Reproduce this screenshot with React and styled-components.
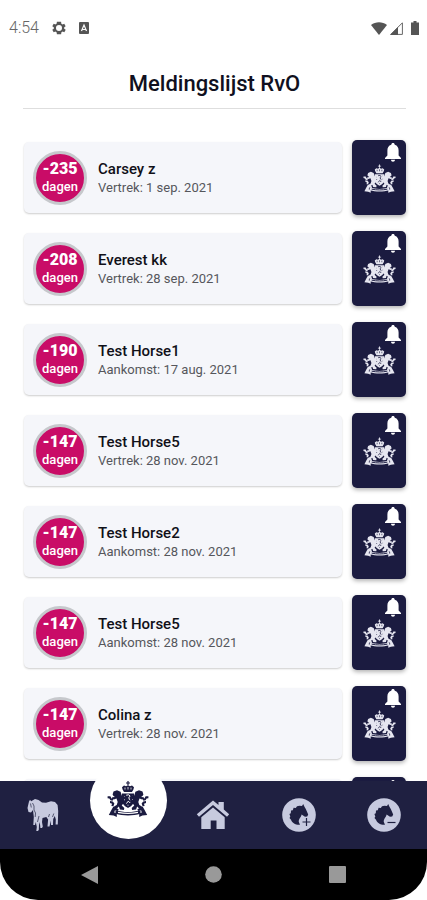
import React from 'react'
import styled, { createGlobalStyle } from 'styled-components'

const items = [
  { days: '-235', name: 'Carsey z', info: 'Vertrek: 1 sep. 2021' },
  { days: '-208', name: 'Everest kk', info: 'Vertrek: 28 sep. 2021' },
  { days: '-190', name: 'Test Horse1', info: 'Aankomst: 17 aug. 2021' },
  { days: '-147', name: 'Test Horse5', info: 'Vertrek: 28 nov. 2021' },
  { days: '-147', name: 'Test Horse2', info: 'Aankomst: 28 nov. 2021' },
  { days: '-147', name: 'Test Horse5', info: 'Aankomst: 28 nov. 2021' },
  { days: '-147', name: 'Colina z', info: 'Vertrek: 28 nov. 2021' },
  { days: '', name: '', info: '' },
]

const LionHalf = () => (
  <g>
    <path d="M5.600 13.500 6.500 10.600l3.500-1.400 3.600 1.600 1 3.200 1.700 3.500.4 4.500-2 2.500 2.600 2.500-.4 2-4-.6-1-2.800-2 1.800-3 .6.200-2.400 2.600-1.600 1-3-1.200-3.500-2.600 1-2.200-.8.600-1.400 2.600-.4-1.600-1.200z" />
    <path d="M14.500 15.500 18 13.200l.6 1.200-3.600 3zM15.500 20l3.500-1 .4 1.400-3.600 1.800z" />
    <path d="M.6 15.200h2.800l1.200 2.200 1.600.8-.6 1.600-2.200-.6-1-1.600-1.800-.4zM3 20l2.800.6 1.600 2-1 2.600-2-.2.6-2.200-2-.8z" />
    <path d="M6.400 25.400 4.400 29l-2.600 5 4.800.6 3.200 1.400v-3.600l-2.600-1 .8-2.400 3 1 .6-1.800z" />
  </g>
)

const Emblem = ({ size, cutout }) => (
  <svg width={size} height={size} viewBox="0 0 42 38" fill="currentColor" aria-hidden="true">
    <path d="M20.400 0h1.200v1.400H23v1.200h-1.400v1.600h-1.200V2.600H19V1.400h1.400z" />
    <path d="M15 6.200 17 4.600l2 .6 2-1 2 1 2-.6 2 1.600-.6 2.200L25 11h-8l-1.400-2.600z" />
    <path d="M18 6.500v2M21 6v2.500M24 6.500v2" stroke={cutout} strokeWidth="0.8" />
    <path d="M15 12.400h12v7.200c0 3.600-3 6-6 7.400-3-1.400-6-3.800-6-7.400z" />
    <path d="m19.200 14.200 2.400-.4 1.600 1.400-1.400 1.200.6 2.200 1.800 1.400-1.400 1.600-1.600-1.400-1.800 2.400" fill="none" stroke={cutout} strokeWidth="1" />
    <path d="M16.800 15.500h.8M17 19h1M24.600 14.500h.8M25 18.500h.8M20.600 24.200h.8" stroke={cutout} strokeWidth="1" />
    <LionHalf />
    <g transform="translate(42 0) scale(-1 1)">
      <LionHalf />
    </g>
    <path d="M8.500 29c4 1.600 8 2 12.500 2s8.500-.4 12.500-2v3.800c-4 1.200-8 1.600-12.500 1.600s-8.500-.4-12.500-1.600z" />
    <path d="M11 31.300c6 1.300 14 1.300 20 0" fill="none" stroke={cutout} strokeWidth="1.200" />
  </svg>
)

const HorsesIcon = () => (
  <svg width="32" height="32" viewBox="0 0 32 32" aria-hidden="true">
    <path
      fill="#c7cadf"
      d="M2 2.500 3 .8l1.200 1.400L8 0l3.500 1L15 3.500l4 .2 5-1.500 4 .8 2.600 3 .6 6-.4 13.500h-2.200l.2-5-1-3.500-1.600 3L26 26h-2l-.2-4.500-1.300 6h-2l.6-7-1.800-2.500-3.800 1-.5 4 .8 4.500-.8 1.500h-1.600l-.6-6-.8 3-.2 5-1 1H9.300l.5-4-1-5-.8 3H6.300l.5-8-.8-7-2 2.500-2.500-.5L.500 9l.8-3.500z"
    />
    <path
      d="M5.500 4 7 7v4l1.500 3-.3 4M12 17l-1.500 6M22.500 15l-1 3M26.800 14.500l-1.300 3.500M3.500 4.500l.8 4"
      fill="none"
      stroke="#555872"
      strokeWidth="1"
    />
  </svg>
)

const HomeIcon = () => (
  <svg width="34" height="30" viewBox="0 0 34 30" fill="#c7cadf" aria-hidden="true">
    <path d="M17 .5 22.500 5V2h5.300v7.600l5.400 4.600-2.200 2.600L17 5 3 16.800.8 14.200z" />
    <path d="m17 7.500 11.700 9.800V29h-8.200v-8.500h-5.800V29H5.300V17.300z" />
  </svg>
)

const HorseHeadIcon = ({ plus }) => (
  <svg width="34" height="34" viewBox="0 0 34 34" aria-hidden="true">
    <circle cx="17" cy="17" r="16.800" fill="#c7cadf" />
    <path fill="#1f2041" d="M17.500 7.800 20 8 21.200 6l1.400 3 1.200 2 2.400 5.500-1 2-2.200.2-3.400-2.200c-.8 3.300-3.200 4.500-2.800 7.600l1.200 2.700c-5 .2-8-2-9-5L7.500 20l.8-1.400L7.400 16l1.400-.8L9 12.600l1.800-.4.8-2.400 2.200.2 1.200-1.800z" />
    <path d={plus ? 'M20.500 24h8M24.500 20v8' : 'M20.500 24.500h8'} stroke="#1f2041" strokeWidth="1.200" />
  </svg>
)

const BellIcon = () => (
  <svg width="16" height="19" viewBox="0 0 16 19" fill="#fff" aria-hidden="true">
    <path d="M8 0c1 0 1.700.6 1.700 1.700C12.500 2.500 13.600 4.700 13.600 7.500v5L16 15v1H0v-1l2.400-2.500v-5c0-2.800 1.100-5 3.900-5.800C6.300.6 7 0 8 0zM6 16.800h4c0 1.200-.8 2-2 2s-2-.8-2-2z" />
  </svg>
)

const StatusBar = () => (
  <Status>
    <StatusGroup>
      <Time>4:54</Time>
      <svg width="14" height="14" viewBox="2 2 20 20" fill="#555" aria-hidden="true">
        <path fillRule="evenodd" d="M19.400 13a7.500 7.500 0 0 0 0-2l2.100-1.600-2-3.500-2.500 1a7.700 7.700 0 0 0-1.700-1L15 3.200H9l-.4 2.700a7.700 7.700 0 0 0-1.700 1l-2.500-1-2 3.500L4.600 11a7.500 7.500 0 0 0 0 2l-2.200 1.600 2 3.500 2.500-1a7.700 7.700 0 0 0 1.700 1l.4 2.700h6l.4-2.700a7.700 7.700 0 0 0 1.700-1l2.500 1 2-3.500zM12 16.300a4.300 4.300 0 1 1 0-8.600 4.300 4.300 0 0 1 0 8.600z" />
      </svg>
      <svg width="10" height="12" viewBox="0 0 10 12" aria-hidden="true">
        <rect width="10" height="12" rx="1" fill="#555" />
        <path d="M2.500 9 5 3l2.500 6M3.500 7.500h3" fill="none" stroke="#fff" strokeWidth="1.200" />
      </svg>
    </StatusGroup>
    <Signals>
      <svg width="16" height="13" viewBox="0 0 16 13" fill="#555" aria-hidden="true">
        <path d="M0 3C4.500-.7 11.500-.7 16 3L8 13z" />
      </svg>
      <svg width="13" height="13" viewBox="0 0 13 13" aria-hidden="true">
        <path d="M.8 12.400 12.400.8v11.600z" fill="none" stroke="#666" strokeWidth="1" />
        <path d="M0 13 8 5v8z" fill="#555" />
      </svg>
      <Battery width="8" height="14" viewBox="0 0 8 14" fill="#555" aria-hidden="true">
        <path d="M2.500 0h3v1.500H8V14H0V1.500h2.500z" />
      </Battery>
    </Signals>
  </Status>
)

const ListItem = ({ days, name, info }) => (
  <Row>
    <Card>
      {name && (
        <>
          <Badge>
            <Days>{days}</Days>
            <Unit>dagen</Unit>
          </Badge>
          <div>
            <Name>{name}</Name>
            <Info>{info}</Info>
          </div>
        </>
      )}
    </Card>
    <ReportButton type="button" aria-label={`Melding ${name}`}>
      <Emblem size={33} cutout="#1b1b40" />
      <BellSpot>
        <BellIcon />
      </BellSpot>
    </ReportButton>
  </Row>
)

const App = () => (
  <Screen>
    <GlobalStyle />
    <StatusBar />
    <Header>
      <Title>Meldingslijst RvO</Title>
    </Header>
    <List>
      {items.map((item, index) => (
        <ListItem key={index} {...item} />
      ))}
    </List>
    <TabBar>
      <Tab href="#paarden" aria-label="Paarden">
        <HorsesIcon />
      </Tab>
      <Tab href="#meldingen" aria-label="Meldingen">
        <ActiveCircle>
          <Emblem size={42} cutout="#fff" />
        </ActiveCircle>
      </Tab>
      <Tab href="#home" aria-label="Home">
        <HomeIcon />
      </Tab>
      <Tab href="#aankomst" aria-label="Aankomst">
        <HorseHeadIcon plus />
      </Tab>
      <Tab href="#vertrek" aria-label="Vertrek">
        <HorseHeadIcon />
      </Tab>
    </TabBar>
    <SystemBar>
      <SystemButton type="button" aria-label="Terug">
        <svg width="17" height="18" viewBox="0 0 17 18" fill="#999">
          <path d="M17 0v18L0 9z" />
        </svg>
      </SystemButton>
      <SystemButton type="button" aria-label="Startscherm">
        <svg width="17" height="17" viewBox="0 0 17 17" fill="#999">
          <circle cx="8.500" cy="8.500" r="8.300" />
        </svg>
      </SystemButton>
      <SystemButton type="button" aria-label="Overzicht">
        <svg width="17" height="17" viewBox="0 0 17 17" fill="#999">
          <rect width="17" height="17" rx="1" />
        </svg>
      </SystemButton>
    </SystemBar>
  </Screen>
)

const GlobalStyle = createGlobalStyle`
  * {
    box-sizing: border-box;
  }
  body {
    margin: 0;
    background: #fff;
    font-family: Roboto, sans-serif;
  }
  svg {
    display: block;
    flex: none;
  }
`

const Screen = styled.div`
  display: flex;
  flex-direction: column;
  height: 100vh;
`

const Status = styled.div`
  display: flex;
  align-items: center;
  justify-content: space-between;
  height: 56px;
  padding: 0 8px 0 9px;
`

const StatusGroup = styled.div`
  display: flex;
  align-items: center;
  gap: 13px;
`

const Time = styled.span`
  font-size: 16px;
  line-height: 20px;
  font-weight: 300;
  color: #666;
`

const Signals = styled.div`
  display: flex;
  align-items: center;
  gap: 3px;
`

const Battery = styled.svg`
  margin-left: 5px;
`

const Header = styled.header`
  margin: 0 21px 0 23px;
  padding: 14px 0 10px;
  border-bottom: 1px solid #dedede;
`

const Title = styled.h1`
  margin: 0;
  font-size: 22px;
  line-height: 28px;
  font-weight: 500;
  text-align: center;
  color: #101020;
`

const List = styled.main`
  flex: 1;
  min-height: 0;
  padding: 31px 21px 0 24px;
  overflow-y: auto;
  scrollbar-width: none;
`

const Row = styled.div`
  display: flex;
  align-items: center;
  gap: 10px;
  margin-bottom: 16px;
`

const Card = styled.div`
  flex: 1;
  display: flex;
  align-items: center;
  gap: 11px;
  height: 71px;
  padding: 0 9px;
  border-radius: 5px;
  background: #f5f6fa;
  box-shadow: 0 1px 2px rgba(0, 0, 0, 0.2);
`

const Badge = styled.div`
  display: flex;
  flex-direction: column;
  align-items: center;
  justify-content: center;
  width: 54px;
  height: 54px;
  border: 3px solid #c6c8cc;
  border-radius: 50%;
  background: #c90c67;
  color: #fff;
`

const Days = styled.strong`
  font-size: 16px;
  line-height: 18px;
  font-weight: 900;
`

const Unit = styled.span`
  font-size: 13px;
  line-height: 18px;
  font-weight: 500;
`

const Name = styled.h2`
  margin: 0;
  font-size: 15px;
  line-height: 20px;
  font-weight: 500;
  color: #101018;
`

const Info = styled.p`
  margin: 0;
  font-size: 13px;
  line-height: 18px;
  color: #55565c;
`

const ReportButton = styled.button`
  position: relative;
  display: flex;
  align-items: center;
  justify-content: center;
  width: 54px;
  height: 75px;
  padding: 3px 0 0;
  border: 0;
  border-radius: 5px;
  background: #1b1b40;
  box-shadow: 0 2px 4px rgba(0, 0, 0, 0.3);
  color: #e6e6f0;
`

const BellSpot = styled.span`
  position: absolute;
  top: 3px;
  right: 5px;
`

const TabBar = styled.nav`
  display: grid;
  grid-template-columns: repeat(5, 1fr);
  grid-template-rows: 68px;
  background: #1f2041;
`

const Tab = styled.a`
  display: flex;
  align-items: center;
  justify-content: center;
`

const ActiveCircle = styled.span`
  display: flex;
  align-items: center;
  justify-content: center;
  width: 77px;
  height: 77px;
  flex: none;
  margin-bottom: 30px;
  border-radius: 50%;
  background: #fff;
  color: #1b1b40;
  z-index: 1;
`

const SystemBar = styled.footer`
  display: flex;
  align-items: center;
  justify-content: space-between;
  height: 51px;
  padding: 0 81px;
  border-radius: 0 0 38px 38px;
  background: #000;
`

const SystemButton = styled.button`
  padding: 0;
  border: 0;
  background: none;
`

export default App
